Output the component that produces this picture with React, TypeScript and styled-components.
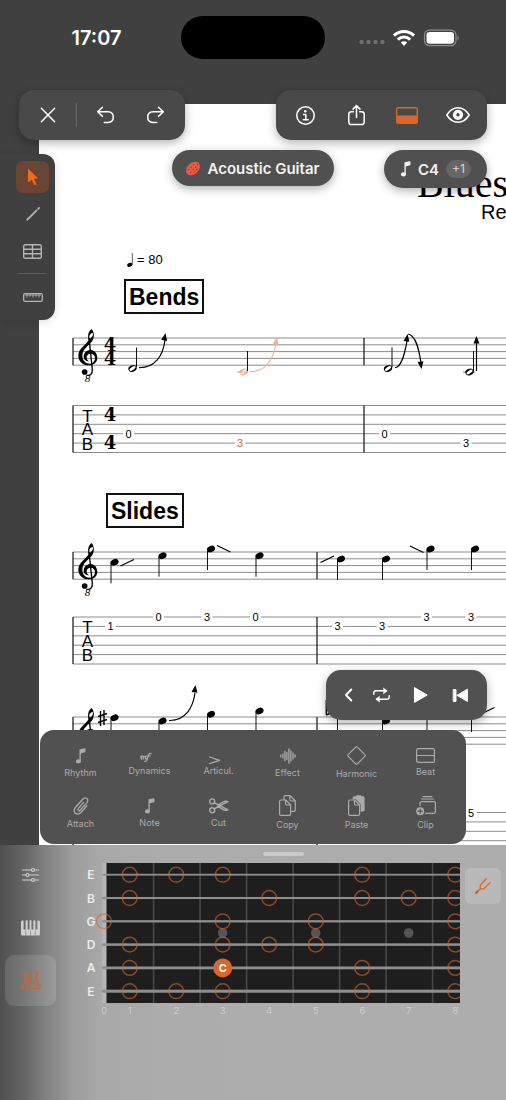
import React from 'react';
import styled, { createGlobalStyle, css } from 'styled-components';

const ORANGE = '#d9662a';
const UI = "Inter, 'Liberation Sans', sans-serif";
const SANS = "'Liberation Sans', Arial, sans-serif";
const SERIF = "'Liberation Serif', 'Times New Roman', serif";

const GlobalStyle = createGlobalStyle`
  * { box-sizing: border-box; }
  body { margin: 0; background: #404040; font-family: ${UI}; }
  button { font: inherit; color: inherit; border: 0; padding: 0; margin: 0; background: none; cursor: pointer; }
  svg { display: block; flex: none; }
`;

const App_ = styled.main`
  display: flex;
  flex-direction: column;
  height: 100vh;
  min-height: 900px;
  overflow: hidden;
`;

const Stage = styled.section`
  flex: 1;
  min-height: 0;
  display: grid;
  grid-template: minmax(0, 1fr) / minmax(0, 1fr);
  background: #404040;
`;

/* ---------- score sheet ---------- */

const Sheet = styled.article`
  grid-area: 1 / 1;
  margin: 104px 0 0 39px;
  padding-top: 62px;
  background: #fff;
  color: #000;
  overflow: hidden;
  white-space: nowrap;
`;

const SheetTitle = styled.h1`
  margin: 0;
  padding-left: 378px;
  font: 400 40px/36px ${SERIF};
`;

const SheetSubtitle = styled.p`
  margin: 0;
  padding-left: 442px;
  font: 400 20px/20px ${SANS};
`;

const Tempo = styled.p`
  display: flex;
  align-items: center;
  gap: 3px;
  margin: 28px 0 9px 88px;
  font: 400 13px/20px ${SANS};
`;

const SectionMark = styled.h2<{ $indent: number; $top?: number }>`
  width: max-content;
  height: 35px;
  margin: ${(p) => p.$top ?? 0}px 0 0 ${(p) => p.$indent}px;
  padding: 0 3px;
  border: 2px solid #111;
  font: 700 23px/32px ${SANS};
`;

const SystemSvg = styled.svg<{ $top?: number }>`
  margin-top: ${(p) => p.$top ?? 0}px;
  overflow: visible;
`;

const FretText = styled.text`
  font: 400 11px ${SANS};
  text-anchor: middle;
`;
const TabLetter = styled.text`
  font: 400 17px ${SANS};
  text-anchor: middle;
`;
const MeterDigit = styled.text`
  font: 700 18px 'DejaVu Serif', ${SERIF};
  text-anchor: middle;
`;
const OctaveDigit = styled.text`
  font: italic 400 11px ${SERIF};
  text-anchor: middle;
`;

const STAFF_TOP = 24;
const STAFF_GAP = 6.8;
const TAB_GAP = 9.4;
const SYSTEM_LEFT = 34;
const SYSTEM_WIDTH = 960;

const Clef = () => (
  <g>
    <g transform={`translate(18 ${STAFF_TOP - 18}) scale(.3333)`}>
      <path
        fillRule="evenodd"
        d="M104 27C112 37 113 51 106 63C98 75 76 86 76 107C76 121 86 131 98 131C109 131 114 122 114 114C114 106 108 101 101 101C93 101 88 107 89 114C90 119 92 122 97 124C87 124 80 118 80 110C80 98 90 90 101 90C113 90 121 101 121 114C121 128 109 136 95 136C77 136 64 123 64 107C64 86 88 74 95 61C91 46 94 34 104 27ZM105 39C98 42 95 49 98 57C106 51 110 45 107 39Z"
      />
      <path d="M96 54L106 148C107 162 98 169 88 165" fill="none" stroke="#000" strokeWidth="4" />
      <circle cx="83" cy="156" r="8.5" />
    </g>
    <OctaveDigit x="48.5" y={STAFF_TOP + 44}>8</OctaveDigit>
  </g>
);

type FretMark = { x: number; line: number; value: string; color?: string };

const System = ({
  top,
  tabOffset,
  bars,
  frets,
  letters = true,
  children,
  label,
}: {
  top?: number;
  tabOffset: number;
  bars: number[];
  frets: FretMark[];
  letters?: boolean;
  children?: React.ReactNode;
  label: string;
}) => {
  const tabTop = STAFF_TOP + tabOffset;
  return (
    <SystemSvg $top={top} width={SYSTEM_WIDTH} height="150" role="img" aria-label={label}>
      <g stroke="#8c8c8c" strokeWidth="1">
        {[0, 1, 2, 3, 4].map((i) => (
          <line key={i} x1={SYSTEM_LEFT} x2={SYSTEM_WIDTH} y1={STAFF_TOP + i * STAFF_GAP} y2={STAFF_TOP + i * STAFF_GAP} />
        ))}
        {[0, 1, 2, 3, 4, 5].map((i) => (
          <line key={i} x1={SYSTEM_LEFT} x2={SYSTEM_WIDTH} y1={tabTop + i * TAB_GAP} y2={tabTop + i * TAB_GAP} />
        ))}
      </g>
      <g stroke="#222" strokeWidth="1.3">
        {[SYSTEM_LEFT, ...bars].map((x) => (
          <React.Fragment key={x}>
            <line x1={x} x2={x} y1={STAFF_TOP} y2={STAFF_TOP + 4 * STAFF_GAP} />
            <line x1={x} x2={x} y1={tabTop} y2={tabTop + 5 * TAB_GAP} />
          </React.Fragment>
        ))}
      </g>
      <Clef />
      {letters && (
        <g>
          <TabLetter x="48.5" y={tabTop + 16}>T</TabLetter>
          <TabLetter x="48.5" y={tabTop + 29.5}>A</TabLetter>
          <TabLetter x="48.5" y={tabTop + 44}>B</TabLetter>
        </g>
      )}
      {frets.map((f) => (
        <g key={f.x}>
          <rect x={f.x - 5.5} y={tabTop + (f.line - 1) * TAB_GAP - 3} width="11" height="6" fill="#fff" />
          <FretText x={f.x} y={tabTop + (f.line - 1) * TAB_GAP + 4} fill={f.color ?? '#000'}>{f.value}</FretText>
        </g>
      ))}
      {children}
    </SystemSvg>
  );
};

const Quarter = ({ x, y }: { x: number; y: number }) => (
  <g>
    <ellipse cx={x} cy={y} rx="4.2" ry="3.1" transform={`rotate(-25 ${x} ${y})`} />
    <line x1={x - 3.5} x2={x - 3.5} y1={y + 1} y2={y + 21} stroke="#111" strokeWidth="1" />
  </g>
);

const Half = ({ x, y, color = '#000' }: { x: number; y: number; color?: string }) => (
  <g>
    <g transform={`rotate(-25 ${x} ${y})`}>
      <ellipse cx={x} cy={y} rx="4.3" ry="3.2" fill={color} />
      <ellipse cx={x} cy={y} rx="3.5" ry="1.5" fill="#fff" transform={`rotate(-10 ${x} ${y})`} />
    </g>
    <line x1={x + 4} x2={x + 4} y1={y - 21} y2={y - 1} stroke="#111" strokeWidth="1" />
  </g>
);

const Bend = ({ d, tip, angle = 10, color = '#000' }: { d: string; tip: [number, number]; angle?: number; color?: string }) => (
  <g>
    <path d={d} fill="none" stroke={color} strokeWidth="1.2" />
    <path d="M0 0L3 7.5L-3 7.5Z" fill={color} transform={`translate(${tip[0]} ${tip[1]}) rotate(${angle})`} />
  </g>
);

const Slide = ({ x, y, dy }: { x: number; y: number; dy: number }) => (
  <line x1={x} y1={y} x2={x + 13.5} y2={y + dy} stroke="#000" strokeWidth="1.2" />
);

const Score = () => (
  <Sheet>
    <SheetTitle>Blues</SheetTitle>
    <SheetSubtitle>Re</SheetSubtitle>
    <Tempo>
      <svg width="7" height="14" viewBox="0 0 7 14" aria-hidden="true">
        <ellipse cx="2.8" cy="11.8" rx="2.7" ry="1.9" transform="rotate(-20 2.8 11.8)" />
        <path d="M5.3 0V11.5" stroke="#333" strokeWidth=".8" />
      </svg>
      = 80
    </Tempo>
    <SectionMark $indent={85}>Bends</SectionMark>
    <System
      label="Bends"
      tabOffset={67.5}
      bars={[325]}
      frets={[
        { x: 89.5, line: 4, value: '0' },
        { x: 201, line: 5, value: '3', color: ORANGE },
        { x: 345.5, line: 4, value: '0' },
        { x: 427, line: 5, value: '3' },
      ]}
    >
      <MeterDigit x="71" y="37">4</MeterDigit>
      <MeterDigit x="71" y="51">4</MeterDigit>
      <MeterDigit x="71" y="107">4</MeterDigit>
      <MeterDigit x="71" y="135">4</MeterDigit>
      <Half x={93.5} y={54.5} />
      <Bend d="M100 53.7C116 54 124 42 126 26" tip={[126.5, 19]} />
      <Half x={204.5} y={58} color="#f0b493" />
      <line x1="198" x2="209" y1="58" y2="58" stroke="#d9a183" />
      <Bend d="M211 57.5C227 58 234 46 237 30" tip={[238, 23]} color="#f0b493" />
      <Half x={349} y={54.5} />
      <Bend d="M356 53.7C363 53 366 38 368 27" tip={[368.5, 20]} angle={8} />
      <Bend d="M369 20C377 21 380 36 382 49" tip={[382.5, 55]} angle={172} />
      <line x1="424" x2="436" y1="58" y2="58" stroke="#777" />
      <Half x={430.5} y={58} />
      <Bend d="M437.5 57V29" tip={[437.5, 22]} angle={0} />
    </System>
    <SectionMark $indent={67} $top={29}>Slides</SectionMark>
    <System
      label="Slides"
      tabOffset={65}
      bars={[278]}
      frets={[
        { x: 71.5, line: 2, value: '1' },
        { x: 119.5, line: 1, value: '0' },
        { x: 168, line: 1, value: '3' },
        { x: 216.5, line: 1, value: '0' },
        { x: 298.5, line: 2, value: '3' },
        { x: 343, line: 2, value: '3' },
        { x: 387.5, line: 1, value: '3' },
        { x: 432, line: 1, value: '3' },
      ]}
    >
      <Quarter x={75.5} y={34.3} />
      <Slide x={81.5} y={38} dy={-6.5} />
      <Quarter x={123.5} y={27.7} />
      <Quarter x={172} y={21} />
      <Slide x={178} y={17.5} dy={6.5} />
      <Quarter x={220.5} y={27.7} />
      <Slide x={281.5} y={34.5} dy={-6.5} />
      <Quarter x={302} y={31} />
      <Quarter x={347} y={31} />
      <Slide x={371} y={18} dy={6.5} />
      <Quarter x={391.5} y={21} />
      <Quarter x={436} y={21} />
    </System>
    <System
      top={15}
      label="Hammer-ons"
      tabOffset={95.5}
      bars={[278]}
      letters={false}
      frets={[{ x: 432, line: 1, value: '5' }]}
    >
      <path d="M61.5 18V33M65 17V32M59 23.5L68 20.5M59 29.5L68 26.5" stroke="#000" strokeWidth="1.4" />
      <Quarter x={75.5} y={24.7} />
      <Quarter x={123.5} y={28} />
      <Bend d="M130 27.5C147 28 154 14 156 0" tip={[156.5, -8]} angle={8} />
      <Quarter x={172} y={21.3} />
      <Quarter x={220.5} y={18} />
      <path d="M287.3 7V22M287 22L292 20" fill="none" stroke="#000" strokeWidth="1.4" />
      <Quarter x={302} y={18} />
      <Quarter x={347} y={28} />
      <Quarter x={391.5} y={18} />
      <Quarter x={436} y={18} />
      <Slide x={442} y={21} dy={-6.5} />
    </System>
  </Sheet>
);

/* ---------- floating chrome ---------- */

const Overlay = styled.div`
  grid-area: 1 / 1;
  z-index: 1;
  display: flex;
  flex-direction: column;
  padding: 16px 0 1px;
`;

const StatusBar = styled.header`
  display: grid;
  grid-template-columns: 1fr 144px 1fr;
  height: 43px;
  align-items: center;
  justify-items: center;
  padding: 0 12px;
  color: #fff;
`;

const Clock = styled.time`
  font-size: 20px;
  font-weight: 600;
  line-height: 24px;
`;

const Island = styled.div`
  width: 144px;
  height: 43px;
  border-radius: 22px;
  background: #000;
`;

const Spread = styled.div`
  display: flex;
  justify-content: space-between;
  margin-top: 31px;
  padding: 0 19px;
`;

const Bar = styled.div<{ $width: number }>`
  display: flex;
  align-items: center;
  width: ${(p) => p.$width}px;
  height: 50px;
  padding: 0 4px;
  border-radius: 15px;
  background: #494949;
  color: #fff;
  box-shadow: 0 3px 10px rgba(0, 0, 0, 0.3);
`;

const BarButton = styled.button`
  flex: 1;
  height: 50px;
  display: grid;
  place-items: center;
`;

const BarDivider = styled.span`
  width: 1px;
  height: 24px;
  margin: 0 3px;
  background: #666;
`;

const Middle = styled.div`
  flex: 1;
  display: grid;
  grid-template-columns: 1fr auto 1fr;
  align-items: start;
  padding-top: 10px;
`;

const Rail = styled.nav`
  display: flex;
  flex-direction: column;
  align-items: flex-end;
  width: 55px;
  margin-top: 4px;
  padding: 7px 6px 7px 0;
  gap: 5px;
  border-radius: 0 12px 12px 0;
  background: #404040;
  color: #b4b4b4;
  box-shadow: 0 2px 8px rgba(0, 0, 0, 0.12);
`;

const RailButton = styled.button<{ $active?: boolean }>`
  width: 33px;
  height: 32px;
  display: grid;
  place-items: center;
  border-radius: 7px;
  ${(p) => p.$active && css`background: #6b4534; color: #ee6c1c;`}
`;

const RailDivider = styled.span`
  width: 28px;
  height: 1px;
  margin: 1px 3px 2px 0;
  background: #5c5c5c;
`;

const Pill = styled.button`
  display: flex;
  align-items: center;
  gap: 7px;
  height: 36px;
  padding: 0 14px;
  border-radius: 19px;
  background: #505050;
  color: #f2f2f2;
  font-size: 15px;
  font-weight: 600;
  white-space: nowrap;
  box-shadow: 0 3px 10px rgba(0, 0, 0, 0.3);
`;

const NotePill = styled(Pill)`
  justify-self: end;
  height: 38px;
  margin-right: 19px;
  padding: 0 16px;
`;

const Badge = styled.span`
  padding: 0 6px;
  border-radius: 9px;
  background: #666;
  color: #ccc;
  font-size: 12px;
  font-weight: 500;
  line-height: 18px;
`;

const Transport = styled(Bar)`
  align-self: flex-end;
  margin: 0 19px 10px 0;
  padding: 0 8px 0 4px;
  background: #515151;
`;

const Palette = styled.div`
  display: grid;
  grid-template-columns: repeat(6, 1fr);
  grid-auto-rows: 50px;
  margin: 0 40px;
  padding: 8px 6px 6px;
  border-radius: 14px;
  background: #515151;
  color: #ababab;
`;

const PaletteButton = styled.button`
  display: flex;
  flex-direction: column;
  align-items: center;
  justify-content: center;
  gap: 3px;
  font-size: 9px;
  font-weight: 400;
  line-height: 12px;
`;

/* ---------- icons ---------- */

type IconProps = { w: number; h: number; sw?: number; children: React.ReactNode };
const Icon = ({ w, h, sw = 1.5, children }: IconProps) => (
  <svg width={w} height={h} viewBox={`0 0 ${w} ${h}`} fill="none" stroke="currentColor" strokeWidth={sw} strokeLinecap="round" strokeLinejoin="round" overflow="visible" aria-hidden="true">
    {children}
  </svg>
);

const EighthIcon = () => (
  <Icon w={11} h={16} sw={1.3}>
    <path d="M5.1 13V2L9.8 .9V3.6L5.3 4.8" fill="currentColor" />
    <ellipse cx="3.4" cy="13.4" rx="2.5" ry="2.1" fill="currentColor" stroke="none" />
  </Icon>
);

const CopyIcon = ({ filled }: { filled?: boolean }) => (
  <Icon w={17} h={21} sw={1.2}>
    {filled ? (
      <path d="M5 4V3Q5 1.5 6.5 1.5H8.5V.6H13V1.5H15Q16.3 1.5 16.3 3V15Q16.3 16.3 15 16.3H13V9.6L8 4Z" fill="currentColor" strokeWidth=".6" />
    ) : (
      <path d="M5 4.5V2Q5 .6 6.4 .6H11L16.3 6V15Q16.3 16.3 15 16.3H12.5M10.8 .8V4.6Q10.8 6 12.2 6H16" />
    )}
    <path d="M2 5H6.8L11.6 10V19Q11.6 20.3 10.2 20.3H2Q.6 20.3 .6 19V6.4Q.6 5 2 5ZM6.5 5.2V8.7Q6.5 10 7.9 10H11.4" />
  </Icon>
);

const paletteItems: { label: string; icon: React.ReactNode }[] = [
  { label: 'Rhythm', icon: <EighthIcon /> },
  {
    label: 'Dynamics',
    icon: (
      <Icon w={20} h={13} sw={1}>
        <path d="M.5 8L1.7 7L1.4 10.2M1.7 8Q3.4 6.2 3.6 7.6L3.2 10.2M3.6 8.2Q5.4 6.2 5.6 7.6L5.3 10L6.4 9.4" strokeWidth="1.2" />
        <path d="M4.8 12.4Q6.6 13 7.6 9L8.3 6.5Q9.2 4 11.2 4.6M6.5 7H10.4" strokeWidth="1.2" />
      </Icon>
    ),
  },
  { label: 'Articul.', icon: <Icon w={20} h={13} sw={1.3}><path d="M.6 8L10.6 11.3L.6 14.6" /></Icon> },
  {
    label: 'Effect',
    icon: <Icon w={16} h={16} sw={1.3}><path d="M.8 7.2V8.8M2.9 6V10M4.9 3.2V12.8M6.9 4.5V11.5M8.9 .8V15.2M10.9 3V13M13 5V11M15 7V9" /></Icon>,
  },
  { label: 'Harmonic', icon: <Icon w={19} h={19} sw={1.2}><path d="M8.6 1.2Q9.5 .4 10.4 1.2L17.8 8.6Q18.6 9.5 17.8 10.4L10.4 17.8Q9.5 18.6 8.6 17.8L1.2 10.4Q.4 9.5 1.2 8.6Z" /></Icon> },
  { label: 'Beat', icon: <Icon w={19} h={15} sw={1.2}><rect x=".6" y=".6" width="17.8" height="13.8" rx="1.6" /><path d="M.6 7.5H18.4" /></Icon> },
  {
    label: 'Attach',
    icon: (
      <Icon w={16} h={18} sw={1.3}>
        <path d="M10.6 5.4L5.3 11.6C4 13.2 5.8 14.8 7.2 13.3L14 5.6C16.6 2.4 12.6 -.9 9.7 2.2L2.4 10.5C-1.4 15 4.2 19.6 8.2 15.3L13.9 8.8" />
      </Icon>
    ),
  },
  { label: 'Note', icon: <EighthIcon /> },
  {
    label: 'Cut',
    icon: (
      <Icon w={20} h={16} sw={1.4}>
        <circle cx="3.2" cy="3.4" r="2.5" /><circle cx="3.2" cy="12.2" r="2.5" />
        <path d="M5.4 4.8L10 7.2L19 11.8Q16.5 13 13.8 11.4L8.5 8.2M5.4 10.8L10 8.2L19 3.6Q16.5 2.6 13.8 4L9 7" />
      </Icon>
    ),
  },
  { label: 'Copy', icon: <CopyIcon /> },
  { label: 'Paste', icon: <CopyIcon filled /> },
  {
    label: 'Clip',
    icon: (
      <Icon w={20} h={20} sw={1.2}>
        <path d="M7 .6H16M5.5 3H17.5" />
        <path d="M4 9.5V7.5Q4 5.6 6 5.6H17.4Q19.4 5.6 19.4 7.5V15.5Q19.4 17.4 17.4 17.4H9.5" />
        <circle cx="4.2" cy="15.2" r="4" fill="currentColor" stroke="none" />
        <path d="M4.2 13V17.4M2 15.2H6.4" stroke="#515151" />
      </Icon>
    ),
  },
];

/* ---------- instrument panel ---------- */

const Panel = styled.section`
  display: grid;
  grid-template-columns: 60px minmax(0, 1fr);
  height: 255px;
  background: linear-gradient(90deg, #4f4f4f 0, #636363 22px, #868686 50px, #9c9c9c 72px, #a8a8a8 100px, #acacac 160px, #adadad 100%);
`;

const PanelNav = styled.nav`
  display: flex;
  flex-direction: column;
  gap: 2px;
  padding: 4px 0 0 5px;
  color: #d0d0d0;
`;

const PanelTab = styled.button<{ $active?: boolean }>`
  width: 51px;
  height: 51px;
  display: grid;
  place-items: center;
  border-radius: 9px;
  ${(p) => p.$active && css`background: rgba(255, 255, 255, 0.12); color: #c4683a;`}
`;

const PanelMain = styled.div`
  display: flex;
  flex-direction: column;
`;

const Handle = styled.span`
  align-self: center;
  width: 41px;
  height: 4px;
  margin: 7px 0;
  border-radius: 2px;
  background: #c9c9c9;
`;

const BoardRow = styled.div`
  display: flex;
  align-items: flex-start;
  gap: 5px;
  padding: 0 5px 0 24px;
`;

const Board = styled.svg`
  flex: 1 1 0;
  min-width: 0;
`;

const StringName = styled.text`
  font: 600 12px ${UI};
  text-anchor: middle;
  fill: #ececec;
`;
const FretNumber = styled.text`
  font: 400 9px ${UI};
  text-anchor: middle;
  fill: #cfcfcf;
`;
const RootName = styled.text`
  font: 700 11px ${UI};
  text-anchor: middle;
  fill: #fff;
`;

const TunerButton = styled.button`
  width: 36px;
  height: 36px;
  margin-top: 5px;
  display: grid;
  place-items: center;
  border-radius: 6px;
  background: #b9b9b9;
  color: ${ORANGE};
`;

const strings = ['E', 'B', 'G', 'D', 'A', 'E'];
const fretted: number[][] = [
  [1, 2, 3, 6, 8],
  [1, 4, 6, 7, 8],
  [0, 3, 5, 8],
  [1, 3, 4, 5, 8],
  [1, 6, 8],
  [1, 2, 3, 6, 8],
];
const stringY = (i: number) => 11.7 + i * 23.3;
const noteX = (f: number) => (f === 0 ? 20 : 45.7 + (f - 1) * 46.5);

const Fretboard = () => (
  <Board viewBox="0 0 376 160" role="img" aria-label="Acoustic guitar fretboard">
    <defs>
      <clipPath id="board"><rect x="0" y="0" width="376" height="140" /></clipPath>
    </defs>
    <rect x="18" y="0" width="5" height="140" fill="#b5b5b5" />
    <rect x="22.5" y="0" width="353.5" height="140" fill="#1e1e1e" />
    {[1, 2, 3, 4, 5, 6, 7].map((f) => (
      <rect key={f} x={22.3 + f * 46.5} y="0" width="1.6" height="140" fill="#484848" />
    ))}
    {strings.map((name, i) => {
      const h = 1.8 + i * 0.25;
      return (
        <g key={i}>
          <rect x="18" y={stringY(i) - h / 2} width="358" height={h} fill="#8f8f8f" />
          <StringName x="7" y={stringY(i) + 4.5}>{name}</StringName>
        </g>
      );
    })}
    {[3, 5, 7].map((f) => <circle key={f} cx={noteX(f)} cy="70" r="4.8" fill="#555" />)}
    <g clipPath="url(#board)" fill="none" stroke={ORANGE} strokeOpacity=".6" strokeWidth="1.5">
      {fretted.map((row, i) => row.map((f) => <circle key={`${i}-${f}`} cx={noteX(f)} cy={stringY(i)} r="7.4" />))}
    </g>
    <circle cx={noteX(3)} cy={stringY(4)} r="9.5" fill={ORANGE} />
    <RootName x={noteX(3)} y={stringY(4) + 4}>C</RootName>
    {[0, 1, 2, 3, 4, 5, 6, 7, 8].map((f) => <FretNumber key={f} x={noteX(f)} y="151">{f}</FretNumber>)}
  </Board>
);

export default function App() {
  return (
    <App_>
      <GlobalStyle />
      <Stage>
        <Score />
        <Overlay>
          <StatusBar>
            <Clock>17:07</Clock>
            <Island />
            <svg width="101" height="18" viewBox="0 0 101 18" fill="#fff" aria-hidden="true">
              <g fill="#6f6f6f">
                {[2.5, 9.5, 16.5, 23.5].map((x) => <rect key={x} x={x - 2} y="11" width="4" height="4" rx="1.5" />)}
              </g>
              <g fill="none" stroke="#fff" strokeWidth="3">
                <path d="M35 6.6A14.2 14.2 0 0 1 55 6.6" />
                <path d="M38.8 10.6A8.8 8.8 0 0 1 51.2 10.6" />
              </g>
              <path d="M41.8 13.6A4.8 4.8 0 0 1 48.2 13.6L45 17Z" />
              <rect x="65.5" y="1.1" width="31.5" height="15.6" rx="5" fill="none" stroke="#8d8d8d" strokeWidth="1.2" />
              <rect x="67.5" y="3.1" width="27.5" height="11.6" rx="3.2" />
              <path d="M98.5 6.5Q101 8.9 98.5 11.5Z" fill="#8d8d8d" />
            </svg>
          </StatusBar>

          <Spread>
            <Bar $width={166} role="toolbar" aria-label="Edit">
              <BarButton aria-label="Close"><Icon w={14} h={14}><path d="M.3 .3L13.7 13.7M13.7 .3L.3 13.7" /></Icon></BarButton>
              <BarDivider />
              <BarButton aria-label="Undo"><Icon w={17} h={16}><path d="M5.5 .3L.7 4.8L5.5 9.4M1 4.8H11Q16.3 5 16.3 10.1Q16.3 15.3 11 15.5H7.2" /></Icon></BarButton>
              <BarButton aria-label="Redo"><Icon w={17} h={16}><path d="M11.5 .3L16.3 4.8L11.5 9.4M16 4.8H6Q.7 5 .7 10.1Q.7 15.3 6 15.5H9.8" /></Icon></BarButton>
            </Bar>
            <Bar $width={211} role="toolbar" aria-label="View">
              <BarButton aria-label="Info">
                <Icon w={19} h={19}>
                  <circle cx="9.5" cy="9.5" r="8.7" />
                  <circle cx="9.3" cy="5.3" r="1.2" fill="currentColor" stroke="none" />
                  <path d="M7.6 8.4H9.8V13.6M7.3 13.7H12.2" />
                </Icon>
              </BarButton>
              <BarButton aria-label="Share">
                <Icon w={17} h={20}><path d="M5.3 6.7H3.5Q.8 6.7 .8 9.4V16.9Q.8 19.6 3.5 19.6H13.5Q16.2 19.6 16.2 16.9V9.4Q16.2 6.7 13.5 6.7H11.7M8.5 12.5V.8M5 4.1L8.5 .6L12 4.1" /></Icon>
              </BarButton>
              <BarButton aria-label="Instrument panel" aria-pressed="true">
                <svg width="22" height="17" viewBox="0 0 22 17" aria-hidden="true">
                  <rect x=".7" y=".7" width="20.6" height="15.6" rx="1.6" fill="none" stroke={ORANGE} strokeWidth="1.4" />
                  <rect x=".5" y="8.5" width="21" height="8" rx="1" fill={ORANGE} />
                </svg>
              </BarButton>
              <BarButton aria-label="Visibility">
                <Icon w={24} h={16}><path d="M.8 8Q5.2 .8 12 .8Q18.8 .8 23.2 8Q18.8 15.2 12 15.2Q5.2 15.2 .8 8Z" /><circle cx="12" cy="7.8" r="3.4" strokeWidth="3.4" /></Icon>
              </BarButton>
            </Bar>
          </Spread>

          <Middle>
            <Rail aria-label="Tools">
              <RailButton $active aria-label="Select">
                <svg width="12" height="18" viewBox="0 0 12 18" fill="currentColor" aria-hidden="true"><path d="M1 .5L11.2 10.6L6.8 10.8L9.4 16.2L7.3 17.2L4.8 11.7L1 14.6Z" /></svg>
              </RailButton>
              <RailButton aria-label="Draw">
                <Icon w={14} h={14} sw={1.8}><path d="M2.2 11.8L10.6 3.4M12.2 1.8L13 1M1.2 12.8L2 11.4" /></Icon>
              </RailButton>
              <RailButton aria-label="Table">
                <Icon w={19} h={15} sw={1.4}><rect x=".7" y=".7" width="17.6" height="13.6" rx="1.6" /><path d="M.7 5.2H18.3M.7 9.8H18.3M9.5 .7V14.3" /></Icon>
              </RailButton>
              <RailDivider />
              <RailButton aria-label="Ruler">
                <Icon w={20} h={9} sw={1.3}><rect x=".7" y=".7" width="18.6" height="7.6" rx="1.4" /><path d="M2.5 2H17.5M4 2V4.2M7 2V3.4M10 2V4.2M13 2V3.4M16 2V4.2" strokeWidth=".9" /></Icon>
              </RailButton>
            </Rail>
            <Pill>
              <svg width="14" height="15" viewBox="0 0 14 15" aria-hidden="true">
                <ellipse cx="7" cy="7.5" rx="7.8" ry="5.6" fill="#ee5a41" transform="rotate(-42 7 7.5)" />
                <path d="M2.4 9.2L3.2 8.4M4.8 6.7L5.6 5.9M7.4 4.2L8.2 3.4M4.4 11.8L5.2 11M6.8 9.2L7.6 8.4M9.4 6.5L10.2 5.7M8 11.4L8.8 10.6M10.4 8.8L11.2 8M11.2 3.8L11.9 3.1" stroke="#7d3a32" strokeWidth="1.1" />
              </svg>
              Acoustic Guitar
            </Pill>
            <NotePill>
              <EighthIcon />
              C4
              <Badge>+1</Badge>
            </NotePill>
          </Middle>

          <Transport $width={161} role="toolbar" aria-label="Playback">
            <BarButton aria-label="Collapse"><Icon w={7} h={12} sw={1.9}><path d="M6.3 .5L1 6L6.3 11.5" /></Icon></BarButton>
            <BarButton aria-label="Loop">
              <Icon w={26} h={14} sw={1.4}>
                <path d="M.8 6.2V5Q.8 2.8 3 2.8H13.2M16.2 7.8V9Q16.2 11.2 14 11.2H3.8" />
                <path d="M10.8 .2L14.2 2.8L10.8 5.4ZM6.2 8.6L2.8 11.2L6.2 13.8Z" fill="currentColor" strokeWidth=".6" />
              </Icon>
            </BarButton>
            <BarButton aria-label="Play"><Icon w={18} h={16} sw={1}><path d="M.8 .8L13.2 8L.8 15.2Z" fill="currentColor" /></Icon></BarButton>
            <BarButton aria-label="Back to start"><Icon w={15} h={13} sw={1}><path d="M.6 .6H3V12.4H.6ZM14.4 .6V12.4L4.2 6.5Z" fill="currentColor" /></Icon></BarButton>
          </Transport>
          <Palette>
            {paletteItems.map((item) => (
              <PaletteButton key={item.label}>
                {item.icon}
                {item.label}
              </PaletteButton>
            ))}
          </Palette>
        </Overlay>
      </Stage>

      <Panel>
        <PanelNav aria-label="Instrument views">
          <PanelTab aria-label="Mixer">
            <Icon w={17} h={14} sw={1.1}>
              <path d="M.5 2H9.5M12.5 2H16.5M.5 7H4M7 7H16.5M.5 12H9.5M12.5 12H16.5" />
              <circle cx="11" cy="2" r="1.5" /><circle cx="5.5" cy="7" r="1.5" /><circle cx="11" cy="12" r="1.5" />
            </Icon>
          </PanelTab>
          <PanelTab aria-label="Piano">
            <svg width="19" height="16" viewBox="0 0 19 16" aria-hidden="true">
              <path fill="#d0d0d0" d="M1.5 .5H2.6V9.5H5.4V.5H6.6V9.5H8.8V.5H10.2V9.5H12.4V.5H13.6V9.5H16.4V.5H17.5Q19 .5 19 2V14Q19 15.5 17.5 15.5H1.5Q0 15.5 0 14V2Q0 .5 1.5 .5Z" />
              <path d="M5.4 .5V9.5M9.5 .5V9.5M13.6 .5V9.5" stroke="#d0d0d0" strokeWidth="1.6" />
              <path d="M4.8 10.5V15.5M9.5 10.5V15.5M14.2 10.5V15.5" stroke="#8a8a8a" strokeWidth=".8" />
            </svg>
          </PanelTab>
          <PanelTab $active aria-label="Fretboard">
            <Icon w={20} h={19} sw={1.3}>
              <path d="M4.5 .8V10.5M10 .8V10.5M15.5 .8V10.5" strokeWidth="1.9" />
              <path d="M3 1.2V3.8M8.5 1.2V3.8M17 1.2V3.8" strokeWidth="1" />
              <path d="M.8 17.2Q.6 14 3 12.6Q4.5 8.8 6.5 12.2Q8.2 9 10 11.5Q11.8 9 13.4 12.2Q15.8 8.8 17.2 12.6Q20 14 18.8 17.2Q16.5 18.3 14 16.8Q11.5 18.3 9.8 16.8Q7.5 18.3 5.6 16.8Q3 18.3 .8 17.2Z" />
              <path d="M4 14.6H6.6M9 14.4H11.6M14 14.6H16.6" strokeWidth="1.2" />
            </Icon>
          </PanelTab>
        </PanelNav>
        <PanelMain>
          <Handle />
          <BoardRow>
            <Fretboard />
            <TunerButton aria-label="Tuner">
              <Icon w={16} h={16} sw={1.3}><path d="M11.3 .8L5.2 7.2V10.8H8.8L15.2 4.6M5.2 10.8L3 13" /><path d="M2.8 13.2L1.2 14.8" strokeWidth="2.4" /></Icon>
            </TunerButton>
          </BoardRow>
        </PanelMain>
      </Panel>
    </App_>
  );
}
